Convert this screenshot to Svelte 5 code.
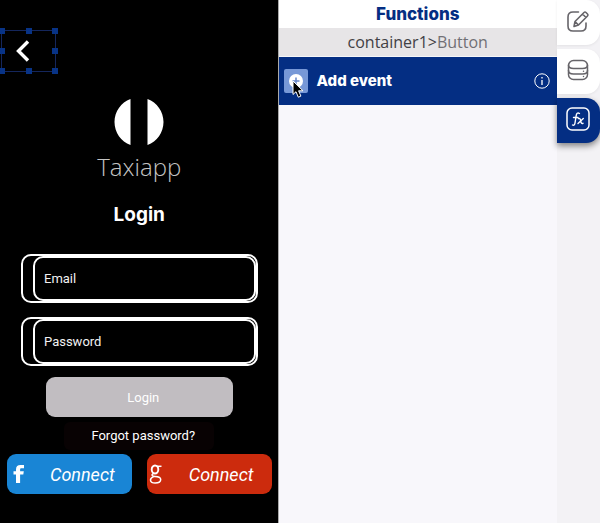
<script>
  const handles = ['nw', 'n', 'ne', 'w', 'e', 'sw', 's', 'se'];
  const fields = [
    { id: 'email', label: 'Email', type: 'email' },
    { id: 'password', label: 'Password', type: 'password' }
  ];
</script>

<div class="editor">
  <main class="phone">
    <button class="back" aria-label="Back">
      <svg width="16" height="24" viewBox="0 0 16 24"><path d="M13 2.500 3.500 12l9.500 9.500" fill="none" stroke="#fff" stroke-width="3.400" /></svg>
      {#each handles as h}<span class="handle {h}"></span>{/each}
    </button>

    <div class="brand">
      <svg width="50" height="48" viewBox="0 0 50 48"><path d="M16.500 1v46C7 43.500.5 34.500.5 24S7 4.500 16.500 1ZM33.500 1v46c9.500-3.500 16-12.500 16-23S43 4.500 33.500 1Z" fill="#fff" /></svg>
      <div class="name">Taxiapp</div>
    </div>

    <h1>Login</h1>

    <form onsubmit={(e) => e.preventDefault()}>
      {#each fields as f}
        <div class="field">
          <input id={f.id} type={f.type} placeholder={f.label} aria-label={f.label} />
        </div>
      {/each}
      <button class="login">Login</button>
    </form>
    <a class="forgot" href="#forgot">Forgot password?</a>
    <div class="social">
      <button class="facebook">
        <svg width="12" height="20" viewBox="0 0 12 20"><path d="M3 19V10.500H.500V7.200H3V5.500C3 2.300 4.600 1 7.500 1H11v3.300H8.700C7.400 4.300 7.100 4.800 7.100 5.700v1.500h3.700l-.500 3.300H7.100V19Z" fill="#fff" /></svg>
        <span>Connect</span>
      </button>
      <button class="google">
        <svg width="14" height="20" viewBox="0 0 14 20" fill="none" stroke="#fff"><ellipse cx="6" cy="5.500" rx="3.300" ry="4" stroke-width="1.900" /><path d="M8 2.300h4.500" stroke-width="1.500" /><path d="M4.500 9.300C1.800 11 3 12.300 6 12.500c3.500.2 5.700.8 5.700 3 0 2.300-2.500 3.500-5.500 3.500-2.800 0-4.700-.9-4.700-2.900 0-1.600 1.200-2.800 3.200-3.500" stroke-width="1.500" /></svg>
        <span>Connect</span>
      </button>
    </div>
  </main>

  <section class="panel">
    <h2>Functions</h2>
    <div class="crumb">container1&gt;<span>Button</span></div>
    <div class="event">
      <button class="add" aria-label="Add event">
        <svg width="16" height="16" viewBox="0 0 16 16"><circle cx="8" cy="8" r="7" fill="#fff" /><path d="M8 4.500v7M4.500 8h7" stroke="#6685c9" stroke-width="1.500" /></svg>
        <svg class="cursor" width="12" height="19" viewBox="0 0 12 19"><path d="M1 1v13.500l3-2.800 2.300 5.500 2.600-1.100-2.300-5.300H11Z" fill="#000" stroke="#fff" /></svg>
      </button>
      <strong>Add event</strong>
      <button class="info" aria-label="Information">
        <svg width="16" height="16" viewBox="0 0 16 16" fill="none" stroke="#fff"><circle cx="8" cy="8" r="7.200" /><path d="M8 7v5M8 4v1.500" stroke-width="1.300" /></svg>
      </button>
    </div>
  </section>

  <nav class="tabs">
    <button aria-label="Edit">
      <svg width="24" height="24" viewBox="0 0 24 24" fill="none" stroke="#666469" stroke-width="1.600" stroke-linecap="round" stroke-linejoin="round"><path d="M12.500 3H7Q2 3 2 8v9q0 5 5 5h8q5 0 5-5v-3" /><path d="M9 12.500 18 3.500q1-1 2 0l1.500 1.500q1 1 0 2l-9 9L8 17.500ZM16.500 5l3.500 3.500M9 12.500l3.500 3.500" /></svg>
    </button>
    <button aria-label="Data">
      <svg width="24" height="24" viewBox="0 0 24 24" fill="none" stroke="#666469" stroke-width="1.500" stroke-linecap="round"><rect x="2.500" y="2.500" width="19" height="19" rx="5" /><path d="M2.500 7q0 3.500 5 3.500h9q5 0 5-3.500M2.500 12.500q0 3.500 5 3.500h9q5 0 5-3.500M17.500 13.200v.1M17.500 18.500v.1" /></svg>
    </button>
    <button class="active" aria-label="Functions">
      <svg width="24" height="24" viewBox="0 0 24 24" fill="none" stroke="#fff" stroke-width="1.500" stroke-linecap="round"><rect x="1" y="1" width="22" height="22" rx="5" /><path d="M13.500 6.500c-2-1.200-3 0-3.300 2L9 16c-.3 2-1.200 2.700-2.500 2M7.500 10.500h4.500M12.500 11.500c1.500-.5 1.800.5 2.200 2.500s.9 3 2.300 2.300M17.300 11.500 12 16.500" stroke-width="1.400" /></svg>
    </button>
  </nav>
</div>

<style>
  :global(body) { margin: 0; }
  * { box-sizing: border-box; }
  button { border: 0; padding: 0; font: inherit; cursor: pointer; }
  svg { display: block; flex: none; }
  .editor {
    display: grid;
    grid-template-columns: minmax(0, 1fr) minmax(0, 1fr) 43px;
    min-height: 100vh;
    background: #f3f2f5;
    font-family: Roboto, sans-serif;
  }
  .phone {
    display: flex;
    flex-direction: column;
    background: #000;
    color: #fff;
    padding: 30px 6px 30px 7px;
    border-right: 1px solid #aaa;
  }
  .back {
    position: relative;
    display: flex;
    align-items: center;
    width: 55px;
    height: 42px;
    margin-left: -6px;
    padding-left: 13px;
    background: none;
    border: 1px solid #14265c;
  }
  .handle {
    position: absolute;
    width: 6px;
    height: 6px;
    background: #083386;
    transform: translate(-50%, -50%);
    left: 50%;
    top: 50%;
  }
  .nw, .w, .sw { left: 0; }
  .ne, .e, .se { left: 100%; }
  .nw, .n, .ne { top: 0; }
  .sw, .s, .se { top: 100%; }
  .brand { display: flex; flex-direction: column; align-items: center; margin-top: 26px; }
  .name { font: 300 24px/36px "Open Sans", sans-serif; color: #c4c4c4; margin-top: 3px; }
  h1 { margin: 18px 0 0; font: 700 19px/24px Inter, sans-serif; text-align: center; }
  form { display: flex; flex-direction: column; gap: 14px; margin: 27px 14px 0; }
  .field { border: 2px solid #fff; border-radius: 10px; padding-left: 10px; height: 49px; }
  input {
    display: block;
    width: 100%;
    height: 45px;
    border: 2px solid #fff;
    border-radius: 10px;
    background: #000;
    color: #fff;
    padding: 0 9px;
    font: 13px Roboto, sans-serif;
  }
  input::placeholder { color: #f2f2f2; opacity: 1; }
  .login {
    height: 40px;
    margin: -3px 25px 0;
    padding-left: 8px;
    border-radius: 9px;
    background: #c1bdc1;
    color: #fff;
    font-size: 13px;
  }
  .forgot {
    align-self: center;
    width: 150px;
    margin-top: 5px;
    padding-left: 8px;
    border-radius: 6px;
    background: #080203;
    color: #fff;
    font-size: 13px;
    line-height: 28px;
    text-align: center;
    text-decoration: none;
  }
  .social { display: grid; grid-template-columns: 1fr 1fr; gap: 15px; margin-top: 4px; }
  .social button {
    display: flex;
    align-items: center;
    height: 40px;
    padding: 0 0 0 6px;
    border-radius: 9px;
    color: #fff;
    font-size: 18px;
    font-style: italic;
  }
  .social span { flex: 1; padding-left: 8px; text-align: center; }
  .social .facebook { background: #1985d5; }
  .social .google { background: #cc2b0d; padding-left: 2px; }
  .panel { background: #f8f7fb; }
  h2 {
    margin: 0;
    background: #fff;
    color: #042e83;
    font: 800 17px/28px Inter, sans-serif;
    text-align: center;
  }
  .crumb {
    background: #e7e5e7;
    color: #414044;
    font: 16px/28px "Open Sans", sans-serif;
    text-align: center;
    border-bottom: 1px solid #f6f6f8;
  }
  .crumb span { color: #717075; }
  .event {
    display: flex;
    align-items: center;
    gap: 9px;
    height: 48px;
    padding: 0 7px 0 5px;
    background: #042e83;
    color: #fff;
  }
  .event strong { font: 800 15px/24px Inter, sans-serif; flex: 1; }
  .add {
    position: relative;
    display: grid;
    place-items: center;
    width: 24px;
    height: 24px;
    border-radius: 2px;
    background: #7798d7;
  }
  .cursor { position: absolute; left: 8px; top: 11px; }
  .info { background: none; }
  .tabs { display: flex; flex-direction: column; gap: 4px; }
  .tabs button {
    display: grid;
    place-items: center;
    height: 45px;
    padding: 0 1px 3px 0;
    border-radius: 0 14px 14px 0;
    background: #fff;
    box-shadow: 0 1px 3px #0001;
  }
  .tabs .active { background: #042e83; box-shadow: 0 3px 6px #0007; }
</style>
